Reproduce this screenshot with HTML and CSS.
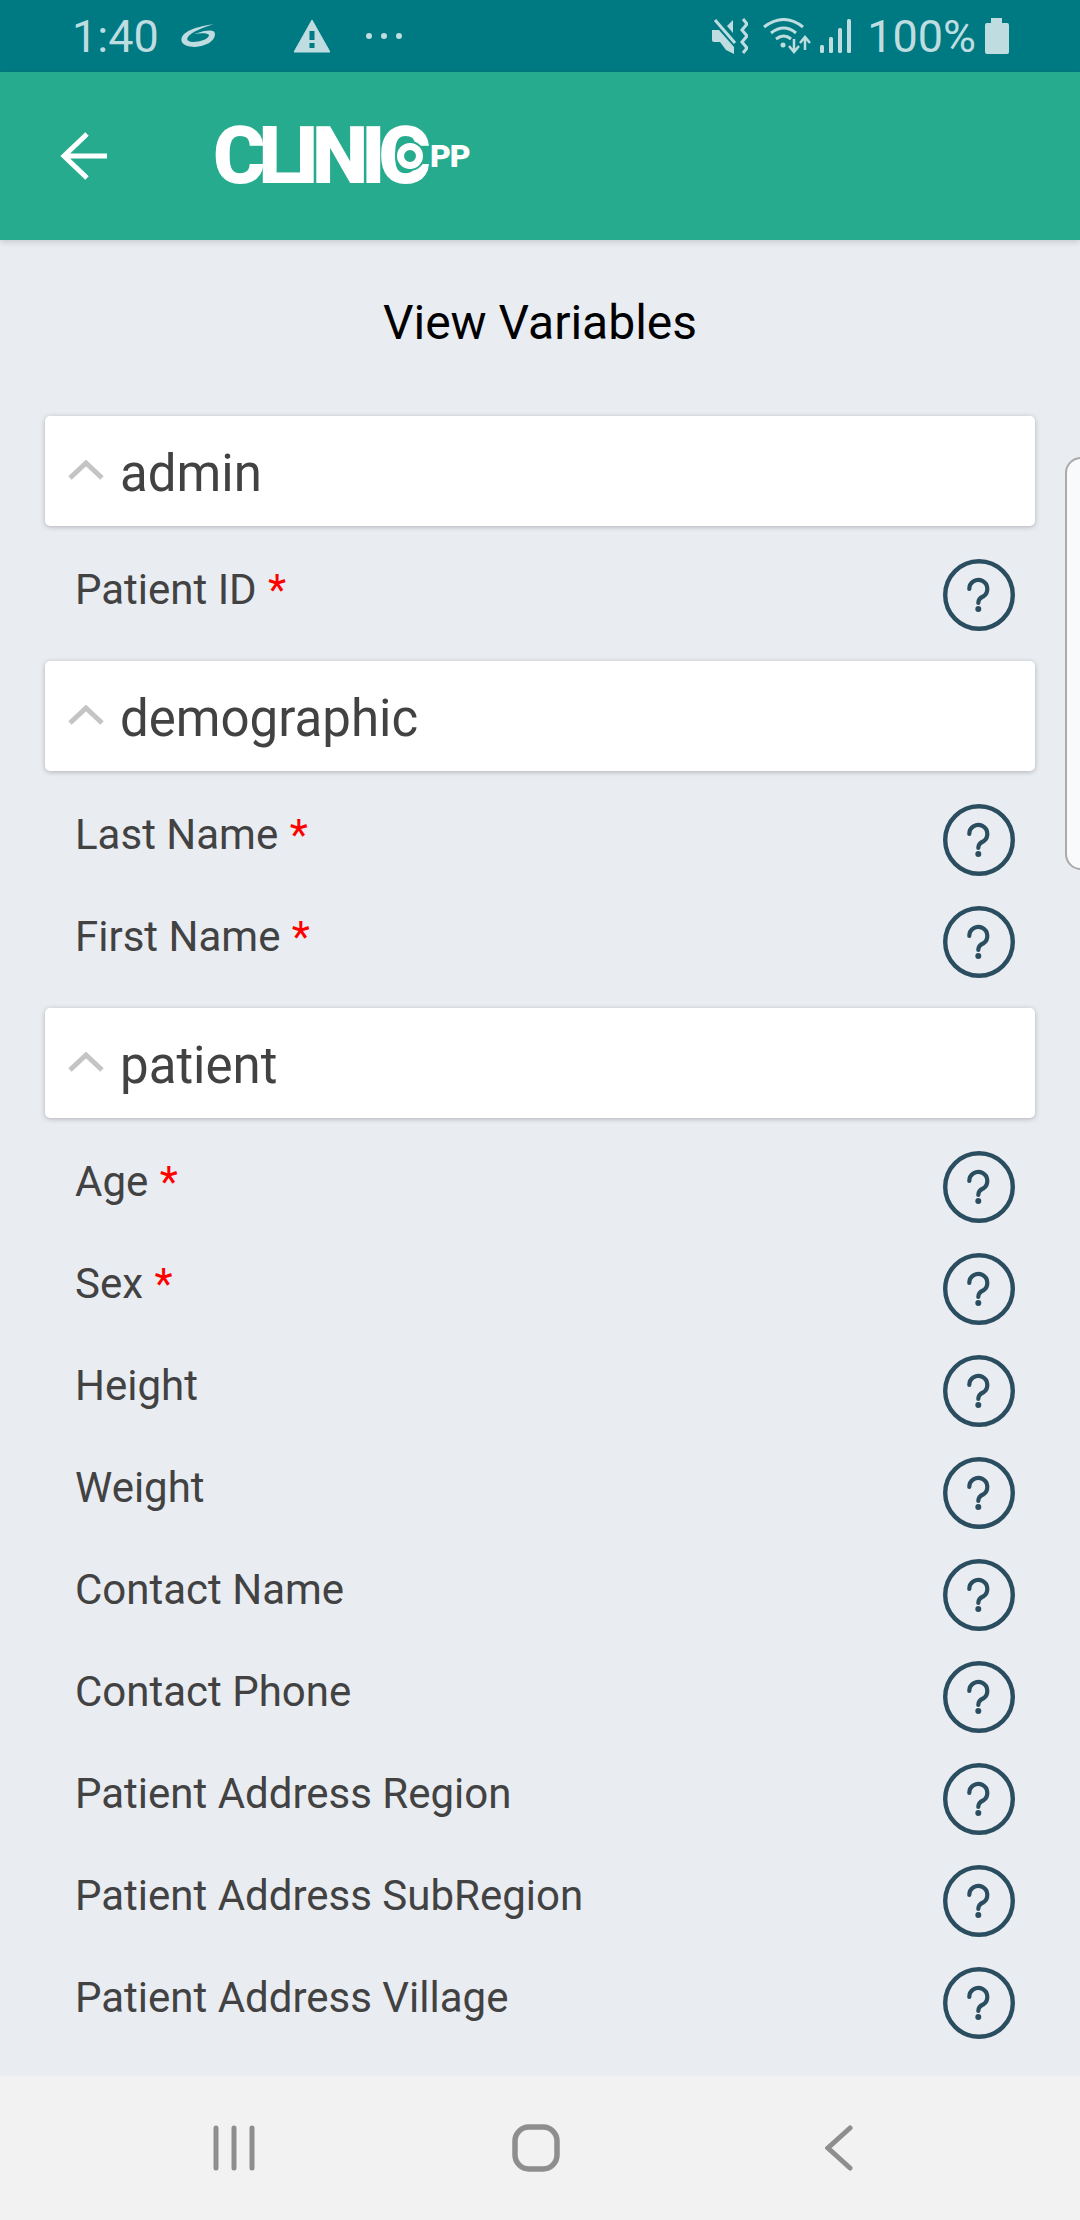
FILE: index.html
```html
<!DOCTYPE html>
<html>

<head>
    <title>View Variables</title>
    <link rel="stylesheet" href="styles.css">
</head>

<body>
    <svg class="icon-defs" width="0" height="0">
        <symbol id="help" viewBox="0 0 72 72">
            <circle cx="36" cy="36" r="33.8" fill="none" stroke="#2a4d60" stroke-width="4.4" />
            <path d="M26.3 30 A9 9 0 1 1 40.5 37.3 Q35.3 39.5 35.3 44" fill="none" stroke="#2a4d60" stroke-width="4.2" stroke-linecap="round" />
            <circle cx="35.3" cy="50" r="3" fill="#2a4d60" />
        </symbol>
        <symbol id="chevron" viewBox="0 0 36 20">
            <path d="M2 18 L18 3 L34 18" fill="none" stroke="#c4c4c4" stroke-width="5" />
        </symbol>
    </svg>

    <!-- Status bar -->
    <div class="status-bar">
        <div class="status-left">
            <span class="status-time">1:40</span>
            <svg class="icon-swirl" width="36" height="26" viewBox="0 0 36 26">
                <path d="M34 1 C22 3 6 6 2 14 C-1 21 7 24 15 24 C25 23 35 19 35 11 C35 7 30 7 24 8 L14 11 C21 10 28 10 29 12 C29 16 20 19 13 19 C8 19 6 17 8 14 C11 9 22 5 34 1 Z" fill="#bfdde0" />
            </svg>
            <svg class="icon-warn" width="36" height="34" viewBox="0 0 36 34">
                <path d="M18 1 L36 33 L0 33 Z" fill="#bfdde0" stroke="#bfdde0" stroke-width="1" stroke-linejoin="round" />
                <rect x="15.5" y="12" width="5" height="9" fill="#007a82" />
                <rect x="15.5" y="24" width="5" height="5" fill="#007a82" />
            </svg>
            <svg class="icon-dots" width="36" height="8" viewBox="0 0 36 8">
                <circle cx="3" cy="4" r="3" fill="#bfdde0" />
                <circle cx="18" cy="4" r="3" fill="#bfdde0" />
                <circle cx="33" cy="4" r="3" fill="#bfdde0" />
            </svg>
        </div>
        <div class="status-right">
            <svg width="36" height="36" viewBox="0 0 36 36">
                <path d="M0 12 H7 L22 29 V36 L14 32 L8 24 H2 Q0 24 0 22 Z" fill="#bfdde0" />
                <path d="M21 2 V15 L15 8 Z" fill="#bfdde0" />
                <path d="M3 2 L23 25" stroke="#bfdde0" stroke-width="3" />
                <path d="M31 1 L35 6 L30 12 L35 18 L30 24 L35 30 L31 35" fill="none" stroke="#bfdde0" stroke-width="3" />
            </svg>
            <svg class="icon-wifi" width="48" height="36" viewBox="0 0 48 36">
                <path d="M1 9 Q21 -6 40 9" fill="none" stroke="#bfdde0" stroke-width="3" />
                <path d="M8 15 Q21 5 33 15" fill="none" stroke="#bfdde0" stroke-width="3" />
                <path d="M13 21 Q21 15 28 21" fill="none" stroke="#bfdde0" stroke-width="3" />
                <circle cx="20" cy="27" r="2.5" fill="#bfdde0" />
                <path d="M31 21 V33 M26 28 L31 34 L36 28" fill="none" stroke="#bfdde0" stroke-width="2.5" />
                <path d="M42 32 V20 M37 25 L42 19 L47 25" fill="none" stroke="#bfdde0" stroke-width="2.5" />
            </svg>
            <svg class="icon-signal" width="32" height="34" viewBox="0 0 32 34">
                <rect x="0" y="26" width="4" height="8" rx="1.5" fill="#bfdde0" />
                <rect x="9" y="18" width="4" height="16" rx="1.5" fill="#bfdde0" />
                <rect x="18" y="9" width="4" height="25" rx="1.5" fill="#bfdde0" />
                <rect x="27" y="0" width="4" height="34" rx="1.5" fill="#bfdde0" />
            </svg>
            <span class="status-battery-text">100%</span>
            <svg class="icon-battery" width="24" height="36" viewBox="0 0 24 36">
                <path d="M6 0 H17 V5 H22 Q24 5 24 7 V34 Q24 36 22 36 H2 Q0 36 0 34 V7 Q0 5 2 5 H6 Z" fill="#bfdde0" />
            </svg>
        </div>
    </div>

    <!-- App bar -->
    <div class="app-bar">
        <svg class="back-arrow" width="48" height="50" viewBox="0 0 48 50">
            <path d="M47 25 H4 M27 3 L4 25 L27 47" fill="none" stroke="#fff" stroke-width="5" />
        </svg>
        <div class="logo">
            <span class="logo-main">CLINIC</span>
            <span class="logo-ring"></span>
            <span class="logo-small">PP</span>
        </div>
    </div>

    <!-- Variables list -->
    <div class="content">
        <h1 class="page-title">View Variables</h1>

        <div class="section-card"><svg class="chevron"><use href="#chevron" /></svg><span>admin</span></div>
        <div class="var-list">
            <div class="var-row"><span class="var-name">Patient ID <em>*</em></span><svg class="help-icon"><use href="#help" /></svg></div>
        </div>

        <div class="section-card"><svg class="chevron"><use href="#chevron" /></svg><span>demographic</span></div>
        <div class="var-list">
            <div class="var-row"><span class="var-name">Last Name <em>*</em></span><svg class="help-icon"><use href="#help" /></svg></div>
            <div class="var-row"><span class="var-name">First Name <em>*</em></span><svg class="help-icon"><use href="#help" /></svg></div>
        </div>

        <div class="section-card"><svg class="chevron"><use href="#chevron" /></svg><span>patient</span></div>
        <div class="var-list">
            <div class="var-row"><span class="var-name">Age <em>*</em></span><svg class="help-icon"><use href="#help" /></svg></div>
            <div class="var-row"><span class="var-name">Sex <em>*</em></span><svg class="help-icon"><use href="#help" /></svg></div>
            <div class="var-row"><span class="var-name">Height</span><svg class="help-icon"><use href="#help" /></svg></div>
            <div class="var-row"><span class="var-name">Weight</span><svg class="help-icon"><use href="#help" /></svg></div>
            <div class="var-row"><span class="var-name">Contact Name</span><svg class="help-icon"><use href="#help" /></svg></div>
            <div class="var-row"><span class="var-name">Contact Phone</span><svg class="help-icon"><use href="#help" /></svg></div>
            <div class="var-row"><span class="var-name">Patient Address Region</span><svg class="help-icon"><use href="#help" /></svg></div>
            <div class="var-row"><span class="var-name">Patient Address SubRegion</span><svg class="help-icon"><use href="#help" /></svg></div>
            <div class="var-row"><span class="var-name">Patient Address Village</span><svg class="help-icon"><use href="#help" /></svg></div>
        </div>

        <!-- Side tab peeking in from the right edge -->
        <div class="side-tab"></div>
    </div>

    <!-- Android nav bar -->
    <div class="nav-bar">
        <svg width="42" height="46" viewBox="0 0 42 46">
            <path d="M3 3 V43 M21 3 V43 M39 3 V43" fill="none" stroke="#8e8e8e" stroke-width="5" stroke-linecap="round" />
        </svg>
        <svg class="nav-home" width="48" height="48" viewBox="0 0 48 48">
            <rect x="3" y="3" width="42" height="42" rx="14" fill="none" stroke="#8e8e8e" stroke-width="5.5" />
        </svg>
        <svg class="nav-back" width="28" height="46" viewBox="0 0 28 46">
            <path d="M25 3 L3 23 L25 43" fill="none" stroke="#8e8e8e" stroke-width="5" stroke-linecap="round" />
        </svg>
    </div>
</body>

</html>
```
FILE: styles.css
```css
* {
    box-sizing: border-box;
}

html,
body {
    margin: 0;
    height: 2220px;
    overflow: hidden;
}

body {
    font-family: 'Roboto', sans-serif;
    background-color: #e9ecf1;
    display: flex;
    flex-direction: column;
}

.icon-defs {
    position: absolute;
}

.status-bar {
    height: 72px;
    flex-shrink: 0;
    background-color: #007a82;
    color: #bfdde0;
    display: flex;
    justify-content: space-between;
    align-items: center;
    padding: 0 71px 0 72px;
    font-size: 45px;
}

.status-left,
.status-right {
    display: flex;
    align-items: center;
}

.icon-swirl {
    margin-left: 21px;
}

.icon-warn {
    margin-left: 78px;
}

.icon-dots {
    margin-left: 36px;
}

.icon-wifi {
    margin-left: 15px;
}

.icon-signal {
    margin-left: 9px;
}

.status-battery-text {
    margin-left: 15px;
}

.icon-battery {
    margin-left: 9px;
}

.app-bar {
    height: 168px;
    flex-shrink: 0;
    background-color: #26ab8e;
    display: flex;
    align-items: center;
    padding-left: 60px;
    box-shadow: 0 2px 6px rgba(0, 0, 0, 0.15);
    position: relative;
}

.logo {
    margin-left: 105px;
    display: flex;
    align-items: center;
    color: #fff;
    position: relative;
}

.logo-main {
    font-size: 80px;
    font-weight: 900;
    letter-spacing: -7px;
}

/* the "a" of the logo: ring with a halo biting into the last C */
.logo-ring {
    position: absolute;
    left: 184px;
    top: 34px;
    width: 26px;
    height: 26px;
    border: 7px solid #fff;
    border-radius: 50%;
    background-color: #26ab8e;
    box-shadow: 0 0 0 2px #26ab8e;
}

.logo-small {
    font-size: 32px;
    font-weight: 900;
    margin-left: 6px;
    letter-spacing: -1px;
    position: relative;
}

.content {
    flex: 1;
    padding: 0 45px;
    position: relative;
}

.page-title {
    margin: 0;
    height: 176px;
    padding-top: 57px;
    font-size: 48px;
    font-weight: 400;
    line-height: 52px;
    color: #000;
    text-align: center;
    width: 990px;
}

.section-card {
    height: 110px;
    background-color: #fff;
    border-radius: 5px;
    box-shadow: 0 1px 5px rgba(0, 0, 0, 0.25);
    display: flex;
    align-items: center;
    padding-left: 23px;
    font-size: 51px;
    color: #424242;
}

.section-card span {
    padding-top: 5px;
}

.chevron {
    width: 36px;
    height: 20px;
    margin-right: 16px;
    margin-bottom: 3px;
}

.var-list {
    padding: 18px 0 15px;
}

.var-row {
    height: 102px;
    display: flex;
    justify-content: space-between;
    align-items: center;
    padding: 0 20px 0 30px;
    font-size: 42px;
    color: #424242;
}

.var-name {
    margin-bottom: 12px;
}

.var-name em {
    color: #f00;
    font-style: normal;
    margin-left: 1px;
}

.help-icon {
    width: 72px;
    height: 72px;
}

.side-tab {
    position: absolute;
    top: 217px;
    left: 1065px;
    width: 32px;
    height: 413px;
    background-color: #f9fafc;
    border: 2px solid #aaa;
    border-radius: 16px;
}

.nav-bar {
    height: 144px;
    flex-shrink: 0;
    background-color: #f2f2f2;
    display: flex;
    align-items: center;
    padding-left: 213px;
}

.nav-home {
    margin-left: 257px;
}

.nav-back {
    margin-left: 265px;
}
```
